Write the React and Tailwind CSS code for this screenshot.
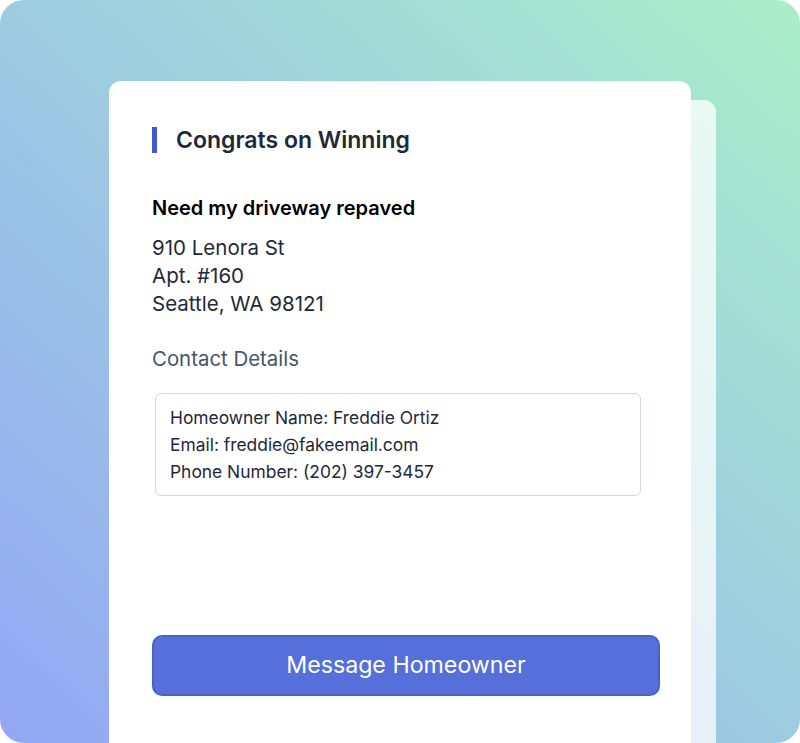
export default function App() {
  const address = ["910 Lenora St", "Apt. #160", "Seattle, WA 98121"];
  const contact = [
    "Homeowner Name: Freddie Ortiz",
    "Email: freddie@fakeemail.com",
    "Phone Number: (202) 397-3457",
  ];

  return (
    <div
      className="w-[800px] h-[743px] rounded-[24px] overflow-hidden bg-linear-to-tr from-[#93a6f4] to-[#aaeec8] pt-[81px] pl-[109px]"
      style={{ fontFamily: "Inter, 'Noto Sans', sans-serif" }}
    >
      <div className="relative w-[582px]">
        {/* back panel */}
        <div className="absolute top-[19px] -right-[25px] w-[100px] h-[700px] rounded-[12px] bg-white/75" />

        <div className="relative w-[582px] h-[700px] rounded-[12px] bg-white pt-[46px] pl-[43px]">
          <div className="flex items-center h-[26px]">
            <div className="w-[5px] h-[26px] bg-[#4257d0]" />
            <h1 className="ml-[19px] text-[23px] font-semibold text-[#1e293b] leading-[26px]">
              Congrats on Winning
            </h1>
          </div>

          <h2 className="mt-[41px] text-[20px] leading-[28px] font-semibold text-black">
            Need my driveway repaved
          </h2>

          <div className="mt-[12px] text-[20.5px] leading-[28px] text-[#1f2937]">
            {address.map((line) => (
              <div key={line}>{line}</div>
            ))}
          </div>

          <div className="mt-[27px] text-[20.4px] leading-[28px] text-[#475569]">
            Contact Details
          </div>

          <div className="mt-[20px] ml-[3px] w-[486px] rounded-[6px] border border-[#d4d8e0] px-[14px] py-[10px] text-[17.4px] leading-[27px] text-[#1e293b]">
            {contact.map((line) => (
              <div key={line}>{line}</div>
            ))}
          </div>

          <button className="mt-[139px] w-[508px] h-[61px] rounded-[10px] border-2 border-[#4a60cc] bg-[#5570db] text-white text-[23.2px]">
            Message Homeowner
          </button>
        </div>
      </div>
    </div>
  );
}
